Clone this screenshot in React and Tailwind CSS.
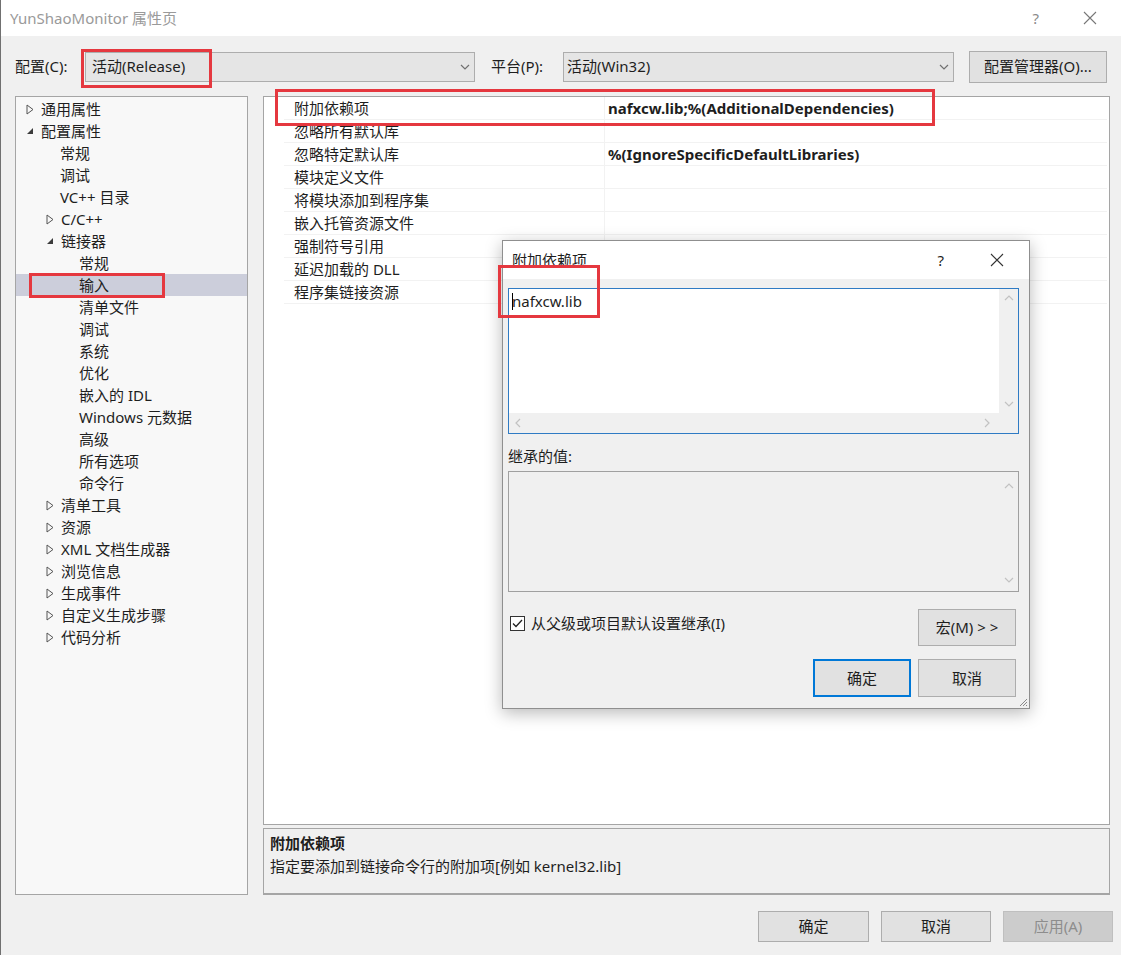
import React from "react";

const Tri = ({ open }) =>
  open ? (
    <svg width="8" height="8" viewBox="0 0 8 8" className="shrink-0">
      <polygon points="7,1 7,7 1,7" fill="#3c3c3c" />
    </svg>
  ) : (
    <svg width="8" height="11" viewBox="0 0 8 11" className="shrink-0">
      <polygon points="1,1 7,5.5 1,10" fill="none" stroke="#555" strokeWidth="1" />
    </svg>
  );

const Chevron = ({ dir = "down", color = "#6a6a6a", size = 10 }) => {
  const d = {
    down: "M1 3 L5 7 L9 3",
    up: "M1 7 L5 3 L9 7",
    left: "M7 1 L3 5 L7 9",
    right: "M3 1 L7 5 L3 9",
  }[dir];
  return (
    <svg width={size} height={size} viewBox="0 0 10 10">
      <path d={d} fill="none" stroke={color} strokeWidth="1.2" />
    </svg>
  );
};

const Close = ({ size = 14, color = "#333" }) => (
  <svg width={size} height={size} viewBox="0 0 14 14">
    <path d="M1 1 L13 13 M13 1 L1 13" stroke={color} strokeWidth="1.1" fill="none" />
  </svg>
);

const tree = [
  { label: "通用属性", lvl: 0, tri: "closed" },
  { label: "配置属性", lvl: 0, tri: "open" },
  { label: "常规", lvl: 1 },
  { label: "调试", lvl: 1 },
  { label: "VC++ 目录", lvl: 1 },
  { label: "C/C++", lvl: 1, tri: "closed" },
  { label: "链接器", lvl: 1, tri: "open" },
  { label: "常规", lvl: 2 },
  { label: "输入", lvl: 2, selected: true },
  { label: "清单文件", lvl: 2 },
  { label: "调试", lvl: 2 },
  { label: "系统", lvl: 2 },
  { label: "优化", lvl: 2 },
  { label: "嵌入的 IDL", lvl: 2 },
  { label: "Windows 元数据", lvl: 2 },
  { label: "高级", lvl: 2 },
  { label: "所有选项", lvl: 2 },
  { label: "命令行", lvl: 2 },
  { label: "清单工具", lvl: 1, tri: "closed" },
  { label: "资源", lvl: 1, tri: "closed" },
  { label: "XML 文档生成器", lvl: 1, tri: "closed" },
  { label: "浏览信息", lvl: 1, tri: "closed" },
  { label: "生成事件", lvl: 1, tri: "closed" },
  { label: "自定义生成步骤", lvl: 1, tri: "closed" },
  { label: "代码分析", lvl: 1, tri: "closed" },
];

const props = [
  ["附加依赖项", "nafxcw.lib;%(AdditionalDependencies)"],
  ["忽略所有默认库", ""],
  ["忽略特定默认库", "%(IgnoreSpecificDefaultLibraries)"],
  ["模块定义文件", ""],
  ["将模块添加到程序集", ""],
  ["嵌入托管资源文件", ""],
  ["强制符号引用", ""],
  ["延迟加载的 DLL", ""],
  ["程序集链接资源", ""],
];

const indent = ["pl-[9px]", "pl-[44px]", "pl-[63px]"];
const triIndent = ["pl-[10px]", "pl-[30px]"];

const App = () => {
  return (
    <div className="relative w-[1121px] h-[955px] bg-[#f0f0f0] flex flex-col overflow-hidden border-l border-[#707070] text-[15px] text-[#1e1e1e] font-['Noto_Sans','Noto_Sans_CJK_SC',sans-serif] leading-none">
      {/* title bar */}
      <div className="h-[36px] bg-white flex items-center pl-[9px] pr-[24px] shrink-0">
        <div className="text-[15px] text-[#9a9a9a] flex-1">YunShaoMonitor 属性页</div>
        <div className="text-[15px] text-[#8a8a8a] mr-[44px]">?</div>
        <Close size={14} color="#777" />
      </div>

      {/* config row */}
      <div className="flex items-center h-[60px] pt-[1px] pl-[14px] shrink-0">
        <div className="w-[70px]">配置(C):</div>
        <div className="w-[390px] h-[30px] bg-[#e5e5e5] border border-[#adadad] flex items-center pl-[6px] pr-[4px]">
          <span className="flex-1">活动(Release)</span>
          <Chevron dir="down" size={10} color="#707070" />
        </div>
        <div className="w-[72px] pl-[16px] box-content">平台(P):</div>
        <div className="w-[391px] h-[30px] bg-[#e5e5e5] border border-[#adadad] flex items-center pl-[3px] pr-[4px]">
          <span className="flex-1">活动(Win32)</span>
          <Chevron dir="down" size={10} color="#707070" />
        </div>
        <div className="ml-[15px] w-[138px] h-[32px] bg-[#e1e1e1] border border-[#adadad] flex items-center justify-center">
          配置管理器(O)...
        </div>
      </div>

      {/* main area */}
      <div className="flex gap-[15px] pl-[14px] h-[799px] shrink-0">
        {/* tree */}
        <div className="w-[233px] bg-[#f8f8f8] border border-[#a5a5a5] pt-[1px]">
          {tree.map((t, i) => (
            <div
              key={i}
              className={`h-[22px] flex items-center ${t.selected ? "bg-[#cccedb]" : ""}`}
            >
              {t.tri ? (
                <div className={`flex items-center gap-[7px] ${triIndent[t.lvl]}`}>
                  <div className="w-[8px] flex justify-center">
                    <Tri open={t.tri === "open"} />
                  </div>
                  <span>{t.label}</span>
                </div>
              ) : (
                <div className={indent[t.lvl]}>{t.label}</div>
              )}
            </div>
          ))}
        </div>

        {/* right column */}
        <div className="w-[847px] flex flex-col gap-[3px]">
          <div className="h-[729px] bg-white border border-[#a5a5a5] pl-[20px] pr-[2px]">
            {props.map(([k, v], i) => (
              <div key={i} className="h-[23px] flex items-center border-b border-[#f2f2f2]">
                <div className="w-[321px] pl-[10px] h-full flex items-center border-r border-[#f2f2f2]">{k}</div>
                <div className="pl-[3px] font-bold">{v}</div>
              </div>
            ))}
          </div>
          <div className="h-[67px] bg-[#f0f0f0] border border-[#a5a5a5] border-b-2 pl-[6px] pt-[5px] flex flex-col gap-[8px]">
            <div className="font-bold h-[15px] flex items-center mt-[2px]">附加依赖项</div>
            <div className="h-[15px] flex items-center">指定要添加到链接命令行的附加项[例如 kernel32.lib]</div>
          </div>
        </div>
      </div>

      {/* bottom buttons */}
      <div className="flex justify-end gap-[12px] pt-[16px] pr-[8px]">
        <div className="w-[111px] h-[31px] bg-[#e1e1e1] border border-[#adadad] flex items-center justify-center">确定</div>
        <div className="w-[110px] h-[31px] bg-[#e1e1e1] border border-[#adadad] flex items-center justify-center">取消</div>
        <div className="w-[110px] h-[31px] bg-[#cccccc] border border-[#bfbfbf] flex items-center justify-center text-[#8d8d8d]">应用(A)</div>
      </div>

      {/* dialog window */}
      <div className="absolute left-[501px] top-[240px] w-[528px] h-[469px] border border-[#8f8f8f] bg-[#f0f0f0] shadow-[0_4px_16px_rgba(0,0,0,0.28)] flex flex-col">
        <div className="h-[38px] bg-white flex items-center pl-[9px] pr-[25px] shrink-0">
          <span className="flex-1">附加依赖项</span>
          <span className="mr-[46px]">?</span>
          <Close size={14} color="#333" />
        </div>
        <div className="flex flex-col pl-[5px] pr-[10px]">
          <div className="mt-[9px] h-[146px] border border-[#2f7bc4] bg-white flex flex-col">
            <div className="flex flex-1">
              <div className="flex-1 pl-[3px] pt-[5px] flex items-start">
                <span className="w-px h-[17px] bg-black mt-[-1px]" />
                <span className="ml-[-1px] h-[15px] flex items-center">nafxcw.lib</span>
              </div>
              <div className="w-[19px] bg-[#f0f0f0] flex flex-col items-center justify-between pt-[4px] pb-[4px]">
                <Chevron dir="up" size={10} color="#c2c2c2" />
                <Chevron dir="down" size={10} color="#c2c2c2" />
              </div>
            </div>
            <div className="h-[20px] bg-[#f0f0f0] flex items-center justify-between pl-[4px] pr-[26px]">
              <Chevron dir="left" size={10} color="#c2c2c2" />
              <Chevron dir="right" size={10} color="#c2c2c2" />
            </div>
          </div>
          <div className="mt-[15px] h-[15px] flex items-center">继承的值:</div>
          <div className="mt-[7px] h-[121px] border border-[#a0a0a0] bg-[#f0f0f0] flex justify-end">
            <div className="w-[19px] flex flex-col items-center justify-between pt-[9px] pb-[6px]">
              <Chevron dir="up" size={10} color="#c2c2c2" />
              <Chevron dir="down" size={10} color="#c2c2c2" />
            </div>
          </div>
          <div className="mt-[17px] flex items-start">
            <div className="mt-[7px] w-[15px] h-[15px] ml-[2px] border border-[#333] bg-white flex items-center justify-center">
              <svg width="11" height="9" viewBox="0 0 11 9">
                <path d="M1 4.5 L4 7.5 L10 1" fill="none" stroke="#222" strokeWidth="1.3" />
              </svg>
            </div>
            <span className="mt-[7px] ml-[6px] flex-1 h-[15px] flex items-center">从父级或项目默认设置继承(I)</span>
            <div className="w-[98px] h-[37px] bg-[#e1e1e1] border border-[#adadad] flex items-center justify-center mr-[3px]">
              宏(M) &gt; &gt;
            </div>
          </div>
          <div className="mt-[13px] flex justify-end gap-[7px] mr-[3px]">
            <div className="w-[98px] h-[38px] bg-[#e1e1e1] border-2 border-[#0078d7] flex items-center justify-center">确定</div>
            <div className="w-[98px] h-[38px] bg-[#e1e1e1] border border-[#adadad] flex items-center justify-center">取消</div>
          </div>
        </div>
        <svg width="10" height="10" viewBox="0 0 10 10" className="absolute right-[1px] bottom-[1px]">
          <path d="M9 2 L2 9 M9 5 L5 9 M9 8 L8 9" stroke="#8a8a8a" strokeWidth="1" />
        </svg>
      </div>

      {/* red annotation boxes */}
      <div className="absolute left-[80px] top-[49px] w-[131px] h-[39px] border-[3px] border-[#e5383f]" />
      <div className="absolute left-[28px] top-[273px] w-[136px] h-[25px] border-[3px] border-[#e5383f]" />
      <div className="absolute left-[274px] top-[89px] w-[660px] h-[37px] border-[3px] border-[#e5383f]" />
      <div className="absolute left-[497px] top-[265px] w-[102px] h-[53px] border-[3px] border-[#e5383f]" />
    </div>
  );
};

export default App;
